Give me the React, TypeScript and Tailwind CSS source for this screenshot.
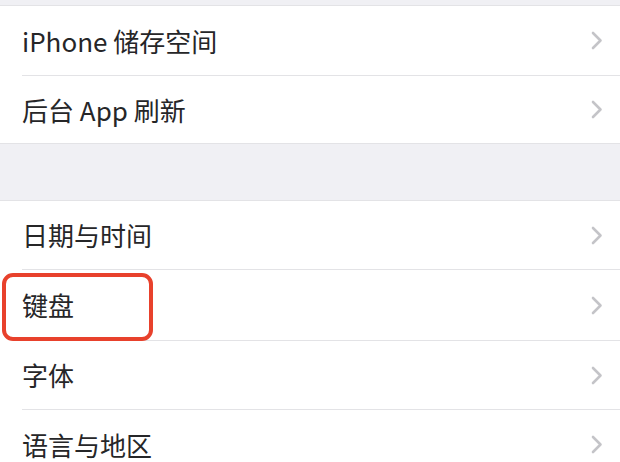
import React from "react";

const Chevron = () => (
  <svg width="12" height="19" viewBox="0 0 12 19" className="shrink-0">
    <path d="M2 2 L9.5 9.5 L2 17" fill="none" stroke="#c4c4c8" strokeWidth="2.6" strokeLinecap="round" strokeLinejoin="round" />
  </svg>
);

const Row = ({ label, h = "h-[69px]" }: { label: string; h?: string }) => (
  <div className={`${h} flex items-center pl-[22px] pr-[17px] bg-white`}>
    <span className="flex-1 text-[26px] text-[#262628] leading-none">{label}</span>
    <Chevron />
  </div>
);

const Sep = () => (
  <div className="bg-white pl-[22px]">
    <div className="h-px bg-[#e3e3e6]" />
  </div>
);

export default function App() {
  return (
    <div
      className="relative w-[620px] h-[462px] overflow-hidden bg-[#f0f0f4]"
      style={{ fontFamily: '"Noto Sans CJK SC", "Noto Sans", sans-serif' }}
    >
      <div className="h-[5px] bg-[#f0f0f4]" />
      <div className="h-px bg-[#e3e3e6]" />
      <Row label="iPhone 储存空间" />
      <Sep />
      <Row label="后台 App 刷新" h="h-[67px]" />
      <div className="h-px bg-[#e3e3e6]" />
      <div className="h-[56px] bg-[#f0f0f4]" />
      <div className="h-px bg-[#e3e3e6]" />
      <Row label="日期与时间" h="h-[68px]" />
      <Sep />
      <Row label="键盘" h="h-[70px]" />
      <Sep />
      <Row label="字体" h="h-[68px]" />
      <Sep />
      <Row label="语言与地区" />
      <div className="absolute left-[2px] top-[273px] w-[151px] h-[68px] border-[4px] border-[#e8412c] rounded-[11px]" />
    </div>
  );
}
